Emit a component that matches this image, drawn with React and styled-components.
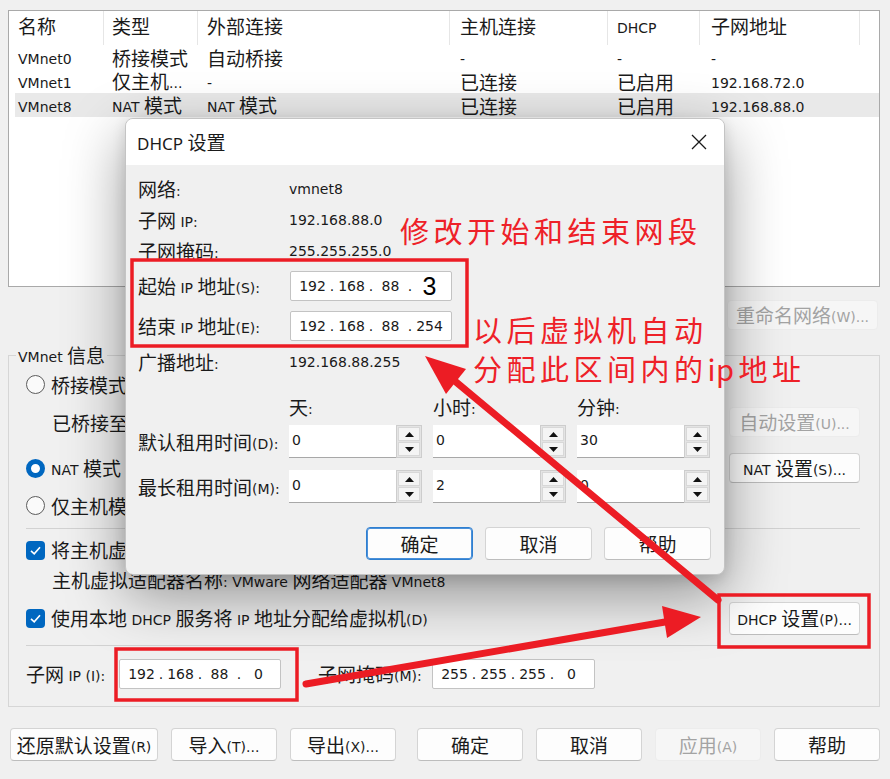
import React from "react";
import styled, { createGlobalStyle } from "styled-components";

const Global = createGlobalStyle`
  html, body { margin: 0; padding: 0; background: #f0f0f0; }
  body {
    font-family: "Noto Sans CJK SC", "Noto Sans", sans-serif;
    font-size: 19px;
    color: #1a1a1a;
  }
  * { box-sizing: border-box; }
`;

const Lat = styled.span`
  font-family: "DejaVu Sans", "Liberation Sans", sans-serif;
  font-size: 14px;
  position: relative;
  top: -1px;
`;

const Txt = styled.span`
  white-space: nowrap;
`;

const HAN = /[\u2E80-\u9FFF\uF900-\uFAFF\uFF00-\uFFEF\u3000-\u303F]+/g;
function mix(s) {
  const out = [];
  const re = new RegExp(HAN.source, "g");
  let last = 0;
  let k = 0;
  let m;
  while ((m = re.exec(s))) {
    if (m.index > last) out.push(<Lat key={k++}>{s.slice(last, m.index)}</Lat>);
    out.push(<React.Fragment key={k++}>{m[0]}</React.Fragment>);
    last = m.index + m[0].length;
  }
  if (last < s.length) out.push(<Lat key={k++}>{s.slice(last)}</Lat>);
  return out;
}
const T = ({ children }) => <Txt>{mix(children)}</Txt>;

/* ---------- main window ---------- */
const Window = styled.div`
  position: relative;
  width: 890px;
  height: 779px;
  overflow: hidden;
  background: #f0f0f0;
  padding: 10px 10px 0 8px;
  display: flex;
  flex-direction: column;
  line-height: 1;
`;

const Table = styled.div`
  height: 277px;
  flex: none;
  background: #fff;
  border: 1px solid #a9a9a9;
  display: flex;
  flex-direction: column;
`;

const COLS = "89px 94px 252px 158px 92px 160px";

const HeadRow = styled.div`
  display: grid;
  grid-template-columns: ${COLS};
  height: 34px;
  margin-left: 6px;
`;

const HeadCell = styled.div`
  display: flex;
  align-items: center;
  padding-left: ${(p) => p.$pl}px;
  padding-bottom: 5px;
  border-right: 1px solid #e6e6e6;
  white-space: nowrap;
`;

const DataRow = styled.div`
  display: grid;
  grid-template-columns: ${COLS};
  height: 24px;
  margin-left: 6px;
  background: ${(p) => (p.$sel ? "#e9e9e9" : "transparent")};
`;

const Cell = styled.div`
  display: flex;
  align-items: center;
  padding-left: ${(p) => p.$pl}px;
  white-space: nowrap;
`;

const RenameRow = styled.div`
  display: flex;
  justify-content: flex-end;
  margin-top: 13px;
  padding-right: 2px;
`;

const Btn = styled.button`
  width: ${(p) => p.$w}px;
  height: ${(p) => p.$h || 33}px;
  flex: none;
  padding: 0;
  font-family: inherit;
  font-size: 19px;
  line-height: 1;
  color: #1a1a1a;
  background: #fdfdfd;
  border: 1px solid #d4d4d4;
  border-bottom-color: #bdbdbd;
  border-radius: 4px;
  display: flex;
  align-items: center;
  justify-content: center;
  white-space: nowrap;
  box-shadow: ${(p) => (p.$primary ? "inset 0 0 0 1px #4a90d9" : "none")};
  ${(p) => (p.$primary ? "border-color: #2f7fd0;" : "")}
  &:disabled {
    background: #f6f6f6;
    border-color: #ececec;
    color: #a3a3a3;
  }
`;

const Group = styled.fieldset`
  margin: 13px 0 0 0;
  padding: 2px 19px 17px 17px;
  border: 1px solid #d6d6d6;
  min-width: 0;
  display: flex;
  flex-direction: column;
`;

const Legend = styled.legend`
  padding: 0 2px;
  margin-left: -10px;
  height: 24px;
  line-height: 24px;
`;

const GRow = styled.div`
  display: flex;
  align-items: center;
  justify-content: space-between;
  height: ${(p) => p.$h}px;
  margin-top: ${(p) => p.$mt || 0}px;
  white-space: nowrap;
`;

const Choice = styled.div`
  display: flex;
  align-items: center;
  gap: 6px;
  padding-left: ${(p) => p.$indent || 0}px;
`;

const RadioDot = styled.span`
  width: 19px;
  height: 19px;
  flex: none;
  border-radius: 50%;
  background: #fafafa;
  border: ${(p) => (p.$on ? "5.5px solid #0067c0" : "1px solid #5c5c5c")};
  ${(p) => (p.$on ? "background: #fff;" : "")}
`;

const CheckBox = styled.span`
  width: 19px;
  height: 19px;
  flex: none;
  border-radius: 4px;
  background: #0067c0;
  display: flex;
  align-items: center;
  justify-content: center;
`;

const Sep = styled.div`
  height: 1px;
  flex: none;
  background: #d2d2d2;
  margin-top: ${(p) => p.$mt}px;
`;

const SubnetRow = styled.div`
  display: flex;
  align-items: center;
  height: 31px;
  margin-top: 12px;
  white-space: nowrap;
`;

const FieldLabel = styled.span`
  width: ${(p) => p.$w}px;
  margin-left: ${(p) => p.$ml || 0}px;
  flex: none;
`;

const IPBox = styled.div`
  width: ${(p) => p.$w || 162}px;
  height: 30px;
  flex: none;
  margin-left: ${(p) => p.$ml || 0}px;
  background: #fff;
  border: 1px solid #c3c3c3;
  border-radius: 2px;
  display: flex;
  align-items: center;
  padding-left: 8px;
  font-family: "DejaVu Sans", sans-serif;
  font-size: 14px;
  color: #1a1a1a;
  white-space: nowrap;
`;

const Oct = styled.span`
  width: 27px;
  text-align: center;
  ${(p) =>
    p.$big
      ? `font-family: "Liberation Sans", sans-serif; font-size: 25px; color: #000;`
      : ""}
`;

const Dot = styled.span`
  width: 12px;
  text-align: center;
`;

const BottomBar = styled.div`
  display: flex;
  gap: 13px;
  margin-top: 21px;
  padding-left: 2px;
`;

const Spacer = styled.div`
  width: 8px;
  margin-left: -13px;
`;

/* ---------- dialog ---------- */
const Dialog = styled.div`
  position: absolute;
  left: 125px;
  top: 118px;
  width: 600px;
  height: 457px;
  background: #f0f0f0;
  border: 1px solid #c4c4c4;
  border-radius: 8px;
  box-shadow: 0 20px 60px rgba(0, 0, 0, 0.4), 0 4px 14px rgba(0, 0, 0, 0.12);
  overflow: hidden;
  display: flex;
  flex-direction: column;
`;

const TitleBar = styled.div`
  height: 46px;
  flex: none;
  background: #fff;
  display: flex;
  align-items: center;
  justify-content: space-between;
  padding: 0 17px 0 11px;
  ${Lat} {
    font-family: "Noto Sans", "DejaVu Sans", sans-serif;
    font-size: 17px;
    top: 0;
  }
`;

const DBody = styled.div`
  display: flex;
  flex-direction: column;
  padding: 9px 13px 0 12px;
`;

const DRow = styled.div`
  display: grid;
  grid-template-columns: 140px 133px 133px 133px;
  column-gap: 11px;
  align-items: center;
  height: ${(p) => p.$h}px;
  margin-top: ${(p) => p.$mt || 0}px;
  white-space: nowrap;
`;

const Value = styled.span`
  grid-column: 2 / span 3;
  font-family: "DejaVu Sans", sans-serif;
  font-size: 14px;
`;

const Spin = styled.div`
  display: flex;
  height: 33px;
`;

const SpinField = styled.div`
  flex: 1;
  background: #fff;
  border-bottom: 1px solid #a8a8a8;
  display: flex;
  align-items: center;
  padding: 0 0 3px 3px;
  font-family: "DejaVu Sans", sans-serif;
  font-size: 14px;
`;

const SpinBtns = styled.div`
  width: 26px;
  flex: none;
  display: flex;
  flex-direction: column;
  gap: 1px;
  padding: 1px;
  background: #e4e4e4;
  border: 1px solid #cdcdcd;
`;

const SpinArrow = styled.div`
  flex: 1;
  background: #f4f4f4;
  border: 1px solid #d8d8d8;
  display: flex;
  align-items: center;
  justify-content: center;
`;

const DButtons = styled.div`
  display: flex;
  justify-content: flex-end;
  gap: 12px;
  margin-top: 24px;
`;

/* ---------- annotations ---------- */
const Marks = styled.svg`
  position: absolute;
  left: 0;
  top: 0;
  pointer-events: none;
`;

const Note = styled.div`
  position: absolute;
  left: ${(p) => p.$x}px;
  top: ${(p) => p.$y}px;
  color: #ee2128;
  font-family: "Noto Sans CJK SC", sans-serif;
  font-size: 29px;
  letter-spacing: 4.5px;
  line-height: 1;
  white-space: nowrap;
  pointer-events: none;
`;

const NoteLatin = styled.span`
  letter-spacing: 0.5px;
  margin-right: 4px;
`;

/* ---------- parts ---------- */
const Tick = () => (
  <svg width="13" height="13" viewBox="0 0 13 13">
    <polyline points="2,6.8 5.2,9.8 11,3.2" fill="none" stroke="#fff" strokeWidth="1.6" />
  </svg>
);

const Tri = ({ up }) => (
  <svg width="9" height="5" viewBox="0 0 9 5">
    <polygon points={up ? "0,5 9,5 4.5,0" : "0,0 9,0 4.5,5"} fill="#111" />
  </svg>
);

const SpinBox = ({ v }) => (
  <Spin>
    <SpinField>{v}</SpinField>
    <SpinBtns>
      <SpinArrow><Tri up /></SpinArrow>
      <SpinArrow><Tri /></SpinArrow>
    </SpinBtns>
  </Spin>
);

const IP = ({ parts, big, ...rest }) => (
  <IPBox {...rest}>
    <Oct>{parts[0]}</Oct>
    <Dot>.</Dot>
    <Oct>{parts[1]}</Oct>
    <Dot>.</Dot>
    <Oct>{parts[2]}</Oct>
    <Dot>.</Dot>
    <Oct $big={big}>{parts[3]}</Oct>
  </IPBox>
);

const headers = [
  ["名称", 3],
  ["类型", 8],
  ["外部连接", 9],
  ["主机连接", 10],
  ["DHCP", 9],
  ["子网地址", 11],
];

const rows = [
  ["VMnet0", "桥接模式", "自动桥接", "-", "-", "-"],
  ["VMnet1", "仅主机...", "-", "已连接", "已启用", "192.168.72.0"],
  ["VMnet8", "NAT 模式", "NAT 模式", "已连接", "已启用", "192.168.88.0"],
];

export default function App() {
  return (
    <>
      <Global />
      <Window>
        <Table>
          <HeadRow>
            {headers.map(([h, pl]) => (
              <HeadCell key={h} $pl={pl}>
                <T>{h}</T>
              </HeadCell>
            ))}
          </HeadRow>
          {rows.map((r, i) => (
            <DataRow key={r[0]} $sel={i === 2}>
              {r.map((c, j) => (
                <Cell key={j} $pl={headers[j][1]}>
                  <T>{c}</T>
                </Cell>
              ))}
            </DataRow>
          ))}
        </Table>

        <RenameRow>
          <Btn $w={151} $h={30} disabled>
            <T>重命名网络(W)...</T>
          </Btn>
        </RenameRow>

        <Group>
          <Legend>
            <T>VMnet 信息</T>
          </Legend>
          <GRow $h={30}>
            <Choice>
              <RadioDot />
              <T>桥接模式</T>
            </Choice>
          </GRow>
          <GRow $h={34} $mt={6}>
            <Choice $indent={26}>
              <T>已桥接至</T>
            </Choice>
            <Btn $w={131} $h={30} disabled>
              <T>自动设置(U)...</T>
            </Btn>
          </GRow>
          <GRow $h={32} $mt={13}>
            <Choice>
              <RadioDot $on />
              <T>NAT 模式</T>
            </Choice>
            <Btn $w={131} $h={30}>
              <T>NAT 设置(S)...</T>
            </Btn>
          </GRow>
          <GRow $h={30} $mt={6}>
            <Choice>
              <RadioDot />
              <T>仅主机模</T>
            </Choice>
          </GRow>
          <Sep $mt={8} />
          <GRow $h={30} $mt={6}>
            <Choice>
              <CheckBox><Tick /></CheckBox>
              <T>将主机虚拟适配器连接到此网络(V)</T>
            </Choice>
          </GRow>
          <GRow $h={30}>
            <Choice $indent={26}>
              <T>主机虚拟适配器名称: VMware 网络适配器 VMnet8</T>
            </Choice>
          </GRow>
          <GRow $h={34} $mt={6}>
            <Choice>
              <CheckBox><Tick /></CheckBox>
              <T>使用本地 DHCP 服务将 IP 地址分配给虚拟机(D)</T>
            </Choice>
            <Btn $w={131} $h={33}>
              <T>DHCP 设置(P)...</T>
            </Btn>
          </GRow>
          <Sep $mt={10} />
          <SubnetRow>
            <FieldLabel $w={93}><T>子网 IP (I):</T></FieldLabel>
            <IP parts={["192", "168", "88", "0"]} />
            <FieldLabel $w={114} $ml={37}><T>子网掩码(M):</T></FieldLabel>
            <IP parts={["255", "255", "255", "0"]} $w={163} />
          </SubnetRow>
        </Group>

        <BottomBar>
          <Btn $w={148}><T>还原默认设置(R)</T></Btn>
          <Btn $w={106}><T>导入(T)...</T></Btn>
          <Btn $w={106}><T>导出(X)...</T></Btn>
          <Spacer />
          <Btn $w={106}><T>确定</T></Btn>
          <Btn $w={106}><T>取消</T></Btn>
          <Btn $w={106} disabled><T>应用(A)</T></Btn>
          <Btn $w={106}><T>帮助</T></Btn>
        </BottomBar>

        <Dialog>
          <TitleBar>
            <T>DHCP 设置</T>
            <svg width="16" height="16" viewBox="0 0 16 16">
              <path d="M1 1 L15 15 M15 1 L1 15" stroke="#1a1a1a" strokeWidth="1.3" />
            </svg>
          </TitleBar>
          <DBody>
            <DRow $h={30}>
              <T>网络:</T>
              <Value>vmnet8</Value>
            </DRow>
            <DRow $h={31}>
              <T>子网 IP:</T>
              <Value>192.168.88.0</Value>
            </DRow>
            <DRow $h={31}>
              <T>子网掩码:</T>
              <Value>255.255.255.0</Value>
            </DRow>
            <DRow $h={30} $mt={5}>
              <T>起始 IP 地址(S):</T>
              <Value as="div">
                <IP parts={["192", "168", "88", "3"]} big $ml={1} />
              </Value>
            </DRow>
            <DRow $h={30} $mt={10}>
              <T>结束 IP 地址(E):</T>
              <Value as="div">
                <IP parts={["192", "168", "88", "254"]} $ml={1} />
              </Value>
            </DRow>
            <DRow $h={30} $mt={6}>
              <T>广播地址:</T>
              <Value>192.168.88.255</Value>
            </DRow>
            <DRow $h={26} $mt={17}>
              <span />
              <T>天:</T>
              <T>小时:</T>
              <T>分钟:</T>
            </DRow>
            <DRow $h={33} $mt={5}>
              <T>默认租用时间(D):</T>
              <SpinBox v="0" />
              <SpinBox v="0" />
              <SpinBox v="30" />
            </DRow>
            <DRow $h={33} $mt={12}>
              <T>最长租用时间(M):</T>
              <SpinBox v="0" />
              <SpinBox v="2" />
              <SpinBox v="0" />
            </DRow>
            <DButtons>
              <Btn $w={107} $primary><T>确定</T></Btn>
              <Btn $w={107}><T>取消</T></Btn>
              <Btn $w={107}><T>帮助</T></Btn>
            </DButtons>
          </DBody>
        </Dialog>

        <Marks width="890" height="779" viewBox="0 0 890 779">
          <g fill="none" stroke="#ec1c24" strokeWidth="3.5">
            <rect x="132" y="260" width="335" height="86" />
            <rect x="719" y="595" width="150" height="52" />
            <rect x="116" y="649" width="181" height="51" />
          </g>
          <g stroke="#ec1c24" strokeWidth="7" strokeLinecap="round">
            <line x1="718" y1="600" x2="456" y2="382" />
            <line x1="306" y1="684" x2="665" y2="622" />
          </g>
          <g fill="#ec1c24">
            <polygon points="425,356 466,369 446,394" />
            <polygon points="701,617 662,606 667,638" />
          </g>
        </Marks>

        <Note $x={400} $y={216}>修改开始和结束网段</Note>
        <Note $x={473} $y={315}>以后虚拟机自动</Note>
        <Note $x={473} $y={354}>
          分配此区间内的<NoteLatin>ip</NoteLatin>地址
        </Note>
      </Window>
    </>
  );
}
